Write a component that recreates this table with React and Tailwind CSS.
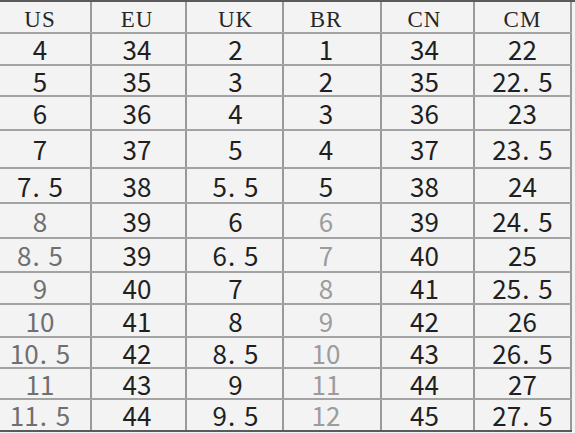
import React from "react";

const header = ["US", "EU", "UK", "BR", "CN", "CM"];
const rows = [
  ["4", "34", "2", "1", "34", "22"],
  ["5", "35", "3", "2", "35", "22. 5"],
  ["6", "36", "4", "3", "36", "23"],
  ["7", "37", "5", "4", "37", "23. 5"],
  ["7. 5", "38", "5. 5", "5", "38", "24"],
  ["8", "39", "6", "6", "39", "24. 5"],
  ["8. 5", "39", "6. 5", "7", "40", "25"],
  ["9", "40", "7", "8", "41", "25. 5"],
  ["10", "41", "8", "9", "42", "26"],
  ["10. 5", "42", "8. 5", "10", "43", "26. 5"],
  ["11", "43", "9", "11", "44", "27"],
  ["11. 5", "44", "9. 5", "12", "45", "27. 5"],
];
const heights = ["h-[32px]", "h-[31px]", "h-[34px]", "h-[38px]", "h-[35px]", "h-[35px]", "h-[34px]", "h-[32px]", "h-[33px]", "h-[31px]", "h-[31px]", "h-[32px]"];
const cols = "grid grid-cols-[90px_95px_97px_98px_93px_99px] w-[572px]";

const cellBase = [
  "flex items-center justify-center pr-[10px]",
  "flex items-center justify-center border-l-2 border-[#999999] pr-[3px]",
  "flex items-center justify-center border-l-2 border-[#999999] pl-[2px]",
  "flex items-center justify-center border-l-2 border-[#999999] pr-[12px]",
  "flex items-center justify-center border-l-2 border-[#999999] pr-[6px]",
  "flex items-center justify-center border-l-2 border-r-2 border-[#999999]",
];

function colorFor(ri, ci) {
  if (ci === 0 && ri >= 5) return "text-[#6f6f6f]";
  if (ci === 3 && ri >= 5) return "text-[#9c9c9c]";
  return "text-[#1f1f1f]";
}

function Num({ text }) {
  const parts = text.split(". ");
  if (parts.length === 1) return <span>{text}</span>;
  return (
    <span className="inline-flex items-baseline">
      <span>{parts[0]}</span>
      <span className="inline-block w-[17px] pl-[1px] text-left">.</span>
      <span>{parts[1]}</span>
    </span>
  );
}

export default function App() {
  return (
    <div className="w-[575px] h-[433px] bg-[#f3f3f3] overflow-hidden">
      <div className="border-t-2 border-[#5a5a5a]">
        <div className={`${cols} h-[30px]`}>
          {header.map((h, ci) => (
            <div
              key={h}
              className={`${cellBase[ci]} pt-[4px] text-[23px] leading-none text-[#262626] tracking-[1px]`}
              style={{ fontFamily: '"Liberation Serif", serif' }}
            >
              {h}
            </div>
          ))}
        </div>
        {rows.map((r, ri) => (
          <div key={ri} className={`${cols} ${heights[ri]} border-t-2 border-[#a3a3a3]`}>
            {r.map((v, ci) => (
              <div
                key={ci}
                className={`${cellBase[ci]} ${colorFor(ri, ci)} text-[26px] leading-none`}
                style={{ fontFamily: '"Noto Sans CJK SC", "Noto Sans", sans-serif' }}
              >
                <Num text={v} />
              </div>
            ))}
          </div>
        ))}
        <div className="w-[572px] border-t-2 border-[#5a5a5a]" />
      </div>
    </div>
  );
}
